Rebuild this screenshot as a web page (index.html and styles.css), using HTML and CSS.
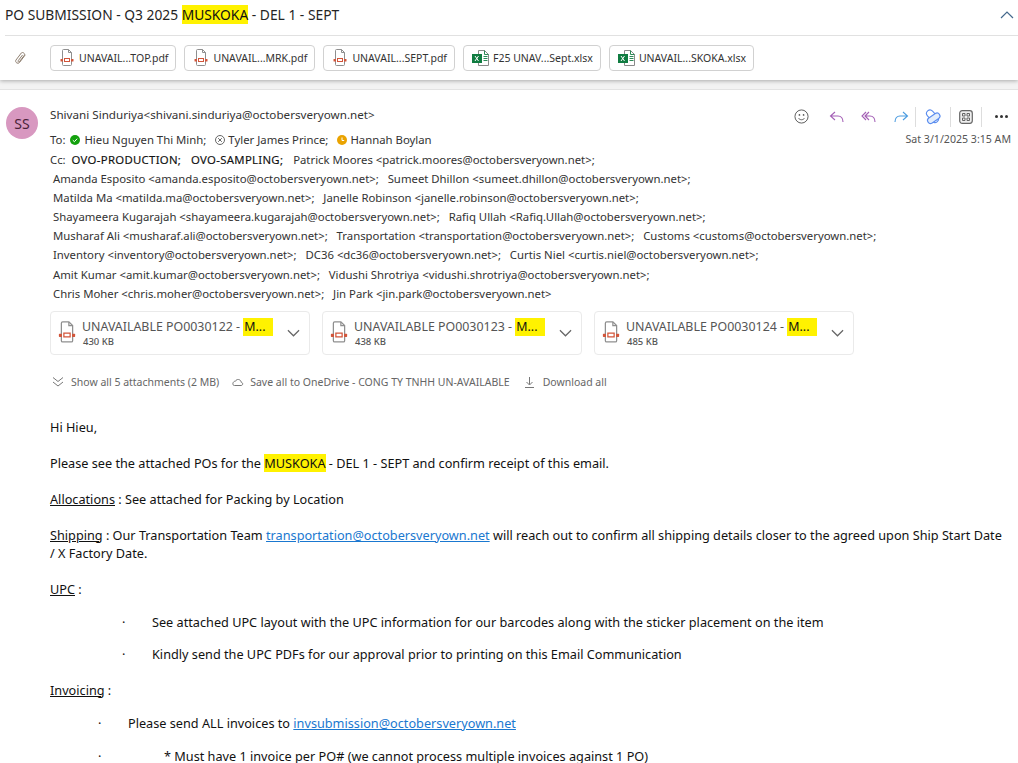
FILE: index.html
```html
<!DOCTYPE html>
<html lang="en">
<head>
    <meta charset="UTF-8">
    <title>PO SUBMISSION - Q3 2025 MUSKOKA - DEL 1 - SEPT</title>
    <link rel="stylesheet" href="styles.css">
</head>
<body>
    <svg class="defs" width="0" height="0">
        <symbol id="pdf" viewBox="0 0 16 18">
            <path d="M3.500 1.500a1 1 0 0 1 1-1h5l3 3v12a1 1 0 0 1-1 1h-7a1 1 0 0 1-1-1z" fill="#fff" stroke="#8f8f8f"/>
            <path d="M9.500 .5v3h3" fill="none" stroke="#8f8f8f"/>
            <rect x="5.500" y="9.500" width="5" height="3" fill="#fff" stroke="#d2553a"/>
            <rect x="1.500" y="10" width="2.500" height="2.500" rx=".5" fill="#d2553a"/>
            <rect x="12" y="10" width="2.500" height="2.500" rx=".5" fill="#d2553a"/>
        </symbol>
        <symbol id="xls" viewBox="0 0 17 16">
            <path d="M6.500 .5h6l4 4v11h-10z" fill="#fff" stroke="#8a8a8a"/>
            <path d="M12.500 .5v4h4M11.500 6.500h4M11.500 8.500h4M11.500 10.500h4" fill="none" stroke="#2c8a57"/>
            <rect x="0" y="4" width="10" height="9" fill="#107c41"/>
            <path d="M3 6l3.500 5M6.500 6L3 11" fill="none" stroke="#fff"/>
        </symbol>
        <symbol id="chev" viewBox="0 0 14 8">
            <path d="M1 1l6 6 6-6" fill="none" stroke="#666" stroke-width="1.300"/>
        </symbol>
    </svg>

    <div class="top">
        <div class="subject">
            <h1>PO SUBMISSION - Q3 2025 <mark>MUSKOKA</mark> - DEL 1 - SEPT</h1>
            <svg class="collapse" width="14" height="8" viewBox="0 0 14 8"><path d="M1 7l6-6 6 6" fill="none" stroke="#44688c" stroke-width="1.200"/></svg>
        </div>
        <div class="file-row">
            <svg class="clip" width="13" height="14" viewBox="0 0 13 14"><path d="M11.300 3.800L5.500 11.500c-1.600 2-5 -.4-3.500-2.500L7.300 2c1.200-1.500 4.200.6 3 2.300L5.500 10.600c-.6.800-1.900 0-1.300-.9L8.600 3.900" fill="none" stroke="#8f7f70"/></svg>
            <div class="file"><svg width="16" height="18"><use href="#pdf"/></svg>UNAVAIL...TOP.pdf</div>
            <div class="file"><svg width="16" height="18"><use href="#pdf"/></svg>UNAVAIL...MRK.pdf</div>
            <div class="file"><svg width="16" height="18"><use href="#pdf"/></svg>UNAVAIL...SEPT.pdf</div>
            <div class="file"><svg width="17" height="16"><use href="#xls"/></svg>F25 UNAV...Sept.xlsx</div>
            <div class="file"><svg width="17" height="16"><use href="#xls"/></svg>UNAVAIL...SKOKA.xlsx</div>
        </div>
    </div>
    <div class="band"></div>

    <div class="message">
        <div class="avatar">SS</div>
        <div class="head">
            <div class="head-top">
                <div class="from">Shivani Sinduriya&lt;shivani.sinduriya@octobersveryown.net&gt;</div>
                <div class="actions">
                    <svg class="smile" width="15" height="15" viewBox="0 0 16 16"><circle cx="8" cy="8" r="7" fill="none" stroke="#555"/><circle cx="5.800" cy="6.300" r=".9" fill="#555"/><circle cx="10.200" cy="6.300" r=".9" fill="#555"/><path d="M4.800 9.800c1.500 2.200 4.900 2.200 6.400 0" fill="none" stroke="#555"/></svg>
                    <svg class="gap" width="16" height="14" viewBox="0 0 16 14"><path d="M6 2L1.500 6 6 10M2 6h7c3 0 5 2 5 6" fill="none" stroke="#a35fb5" stroke-width="1.100"/></svg>
                    <svg class="gap" width="16" height="14" viewBox="0 0 16 14"><path d="M5 2L1 6l4 4M8 2L4 6l4 4M4.500 6H9c3 0 5 2 5 6" fill="none" stroke="#a35fb5" stroke-width="1.100"/></svg>
                    <svg class="gap forward" width="16" height="14" viewBox="0 0 16 14"><path d="M10 2l4.500 4L10 10M14 6H7c-3 0-5 2-5 6" fill="none" stroke="#4a9be0" stroke-width="1.100"/></svg>
                    <i class="sep"></i>
                    <svg width="18" height="18" viewBox="0 0 18 18"><path d="M6 5.500l5 5.500" fill="none" stroke="#5b8def" stroke-width="8" stroke-linecap="round"/><path d="M6 5.500l5 5.500" fill="none" stroke="#fff" stroke-width="5.800" stroke-linecap="round"/><path d="M6.500 12.500l6.500-4.500" fill="none" stroke="#5b8def" stroke-width="7" stroke-linecap="round"/><path d="M6.500 12.500l6.500-4.500" fill="none" stroke="#e4eefc" stroke-width="4.800" stroke-linecap="round"/></svg>
                    <i class="sep"></i>
                    <svg width="14" height="14" viewBox="0 0 14 14"><rect x=".7" y=".7" width="12.600" height="12.600" rx="2.500" fill="#efefef" stroke="#666" stroke-width="1.200"/><path d="M3.500 3.500h2.500v2.500H3.500zM8 3.500h2.500v2.500H8zM3.500 8H6v2.500H3.500zM8 8h2.500v2.500H8z" fill="none" stroke="#666"/></svg>
                    <i class="sep"></i>
                    <div class="more"><b></b><b></b><b></b></div>
                </div>
            </div>
            <div class="to-row">
                <div class="to">
                    <span>To:</span>
                    <svg class="status" width="10" height="10" viewBox="0 0 10 10"><circle cx="5" cy="5" r="5" fill="#13a10e"/><path d="M2.800 5.200l1.600 1.500 2.800-3" fill="none" stroke="#fff"/></svg>
                    <span>Hieu Nguyen Thi Minh;</span>
                    <svg class="status status-far" width="10" height="10" viewBox="0 0 10 10"><circle cx="5" cy="5" r="4.500" fill="none" stroke="#666"/><path d="M3.200 3.200l3.600 3.600M6.800 3.200l-3.600 3.600" stroke="#666"/></svg>
                    <span>Tyler James Prince;</span>
                    <svg class="status status-far" width="10" height="10" viewBox="0 0 10 10"><circle cx="5" cy="5" r="5" fill="#eaa300"/><path d="M5 2.500v3h2.200" fill="none" stroke="#fff"/></svg>
                    <span>Hannah Boylan</span>
                </div>
                <div class="date">Sat 3/1/2025 3:15 AM</div>
            </div>
            <div class="cc">
                <div>Cc: &nbsp;<strong>OVO-PRODUCTION;</strong>&nbsp;&nbsp; <strong>OVO-SAMPLING;</strong>&nbsp;&nbsp; Patrick Moores &lt;patrick.moores@octobersveryown.net&gt;;</div>
                <div class="cc-line">Amanda Esposito &lt;amanda.esposito@octobersveryown.net&gt;;&nbsp;&nbsp; Sumeet Dhillon &lt;sumeet.dhillon@octobersveryown.net&gt;;</div>
                <div class="cc-line">Matilda Ma &lt;matilda.ma@octobersveryown.net&gt;;&nbsp;&nbsp; Janelle Robinson &lt;janelle.robinson@octobersveryown.net&gt;;</div>
                <div class="cc-line">Shayameera Kugarajah &lt;shayameera.kugarajah@octobersveryown.net&gt;;&nbsp;&nbsp; Rafiq Ullah &lt;Rafiq.Ullah@octobersveryown.net&gt;;</div>
                <div class="cc-line">Musharaf Ali &lt;musharaf.ali@octobersveryown.net&gt;;&nbsp;&nbsp; Transportation &lt;transportation@octobersveryown.net&gt;;&nbsp;&nbsp; Customs &lt;customs@octobersveryown.net&gt;;</div>
                <div class="cc-line">Inventory &lt;inventory@octobersveryown.net&gt;;&nbsp;&nbsp; DC36 &lt;dc36@octobersveryown.net&gt;;&nbsp;&nbsp; Curtis Niel &lt;curtis.niel@octobersveryown.net&gt;;</div>
                <div class="cc-line">Amit Kumar &lt;amit.kumar@octobersveryown.net&gt;;&nbsp;&nbsp; Vidushi Shrotriya &lt;vidushi.shrotriya@octobersveryown.net&gt;;</div>
                <div class="cc-line">Chris Moher &lt;chris.moher@octobersveryown.net&gt;;&nbsp;&nbsp; Jin Park &lt;jin.park@octobersveryown.net&gt;</div>
            </div>
            <div class="cards">
                <div class="card">
                    <svg width="20" height="23"><use href="#pdf"/></svg>
                    <div class="card-text">
                        <div class="card-name">UNAVAILABLE PO0030122 - <mark>M...</mark></div>
                        <div class="card-size">430 KB</div>
                    </div>
                    <svg class="card-chev" width="13" height="8"><use href="#chev"/></svg>
                </div>
                <div class="card">
                    <svg width="20" height="23"><use href="#pdf"/></svg>
                    <div class="card-text">
                        <div class="card-name">UNAVAILABLE PO0030123 - <mark>M...</mark></div>
                        <div class="card-size">438 KB</div>
                    </div>
                    <svg class="card-chev" width="13" height="8"><use href="#chev"/></svg>
                </div>
                <div class="card">
                    <svg width="20" height="23"><use href="#pdf"/></svg>
                    <div class="card-text">
                        <div class="card-name">UNAVAILABLE PO0030124 - <mark>M...</mark></div>
                        <div class="card-size">485 KB</div>
                    </div>
                    <svg class="card-chev" width="13" height="8"><use href="#chev"/></svg>
                </div>
            </div>
            <div class="links">
                <span class="link-show"><svg width="12" height="12" viewBox="0 0 12 12"><path d="M1 1.500l5 4 5-4M1 6l5 4 5-4" fill="none" stroke="#777"/></svg>Show all 5 attachments (2 MB)</span>
                <span class="link-save"><svg width="13" height="8" viewBox="0 0 12 8"><path d="M3 7.500h6.500c2.200 0 2.200-3 .2-3.200C9.300 1 5 .5 4 3.200 1.500 2.800 0 7.500 3 7.500z" fill="none" stroke="#777"/></svg>Save all to OneDrive - CONG TY TNHH UN-AVAILABLE</span>
                <span class="link-down"><svg width="9" height="11" viewBox="0 0 9 11"><path d="M4.500 0v7.500M1.500 5l3 3 3-3M0 10.500h9" fill="none" stroke="#777"/></svg>Download all</span>
            </div>
            <div class="body">
                <p>Hi Hieu,</p>
                <p>Please see the attached POs for the <mark>MUSKOKA</mark> - DEL 1 - SEPT and confirm receipt of this email.</p>
                <p><u>Allocations</u> : See attached for Packing by Location</p>
                <p><u>Shipping</u> : Our Transportation Team <a href="#">transportation@octobersveryown.net</a> will reach out to confirm all shipping details closer to the agreed upon Ship Start Date / X Factory Date.</p>
                <p class="list-head"><u>UPC</u> :</p>
                <p class="item item-wide"><span class="bullet">·</span><span>See attached UPC layout with the UPC information for our barcodes along with the sticker placement on the item</span></p>
                <p class="item item-wide item-last"><span class="bullet">·</span><span>Kindly send the UPC PDFs for our approval prior to printing on this Email Communication</span></p>
                <p class="list-head"><u>Invoicing</u> :</p>
                <p class="item"><span class="bullet">·</span><span>Please send ALL invoices to <a href="#">invsubmission@octobersveryown.net</a></span></p>
                <p class="item item-sub"><span class="bullet">·</span><span>* Must have 1 invoice per PO# (we cannot process multiple invoices against 1 PO)</span></p>
            </div>
        </div>
    </div>
</body>
</html>
```

FILE: styles.css
```css
*{
    box-sizing: border-box;
}
html, body{
    height: 763px;
    overflow: hidden;
}
body{
    margin: 0;
    background-color: white;
    color: #242424;
    font-family: "Noto Sans", "Open Sans", sans-serif;
    font-size: 11.350px;
}
mark{
    background-color: #fff200;
    color: #111;
}
.defs{
    position: absolute;
}

/* top bar */
.top{
    height: 80px;
    padding-left: 5px;
    position: relative;
    box-shadow: 0 1px 4px rgba(0,0,0,0.3);
}
.subject{
    display: flex;
    justify-content: space-between;
    align-items: center;
    padding-right: 4px;
    border-bottom: 1px solid #e1e1e1;
    height: 36px;
    padding-bottom: 6px;
}
h1{
    margin: 0;
    font-size: 13.800px;
    font-weight: 400;
    line-height: 19px;
}
.file-row{
    display: flex;
    align-items: center;
    gap: 8px;
    padding-top: 9px;
}
.clip{
    margin: 0 15px 0 9px;
}
.file{
    height: 26px;
    display: flex;
    align-items: center;
    gap: 4px;
    padding: 0 7px 0 8px;
    border: 1px solid #d1d1d1;
    border-radius: 4px;
    font-size: 10.500px;
    color: #333;
}
.band{
    height: 10px;
    background-color: #f3f3f3;
    border-bottom: 1px solid #e3e3e3;
}

/* message */
.message{
    display: flex;
    padding: 17px 0 0 6px;
}
.avatar{
    width: 32px;
    height: 32px;
    flex: none;
    border-radius: 50%;
    background-color: #d898c0;
    color: #4a2238;
    font-size: 14px;
    display: flex;
    align-items: center;
    justify-content: center;
}
.head{
    flex: 1;
    padding-left: 12px;
    min-width: 0;
}
.head-top{
    display: flex;
    justify-content: space-between;
    height: 20px;
    padding-right: 9px;
}
.from{
    font-size: 11.650px;
    line-height: 16px;
    color: #333;
}
.actions{
    display: flex;
    align-items: center;
    gap: 8px;
    margin-top: -1px;
}
.gap{
    margin-left: 8px;
}
.smile{
    margin-right: 4px;
}
.forward{
    margin-right: -2px;
}
.sep{
    width: 1px;
    height: 20px;
    background-color: #ddd;
}
.more{
    display: flex;
    gap: 2px;
    width: 16px;
    justify-content: center;
    margin-left: 3px;
}
.more b{
    width: 3px;
    height: 3px;
    border-radius: 50%;
    background-color: #333;
}
.to-row{
    display: flex;
    justify-content: space-between;
    padding-right: 7px;
    margin-top: 3px;
    height: 20px;
    line-height: 19px;
}
.to{
    display: flex;
    align-items: center;
    align-self: flex-start;
    height: 19px;
    color: #333;
}
.status{
    margin: 0 4px 0 5px;
}
.status-far{
    margin: 0 3px 0 9px;
}
.date{
    color: #555;
    font-size: 10.600px;
}
.cc{
    line-height: 19.100px;
    color: #333;
}
.cc-line{
    padding-left: 3px;
}
.cc strong{
    font-weight: 400;
    color: #111;
    letter-spacing: .3px;
    margin-right: 1px;
    -webkit-text-stroke: .15px #111;
}

/* attachment cards */
.cards{
    display: flex;
    gap: 12px;
    margin-top: 8px;
}
.card{
    width: 260px;
    height: 44px;
    display: flex;
    align-items: center;
    padding: 0 8px 0 6px;
    border: 1px solid #eaeaea;
    border-radius: 4px;
}
.card-text{
    flex: 1;
    padding-left: 5px;
}
.card-name{
    font-size: 12.400px;
    line-height: 19px;
    color: #555;
}
.card-name mark{
    display: inline-block;
    width: 30px;
    line-height: 18px;
    padding-left: 1px;
}
.card-size{
    font-size: 9.500px;
    line-height: 12px;
    padding-left: 1px;
    color: #555;
    font-weight: 500;
}
.card-chev{
    margin-right: 1px;
}
.links{
    display: flex;
    margin-top: 20px;
    font-size: 10.500px;
    line-height: 15px;
    color: #666;
}
.links span{
    display: flex;
    align-items: center;
}
.link-show svg{
    margin: 0 7px 0 2px;
}
.link-save{
    margin-left: 12px;
}
.link-save svg{
    margin-right: 6px;
}
.link-down{
    margin-left: 15px;
}
.link-down svg{
    margin-right: 9px;
}

/* mail body */
.body{
    padding-top: 28px;
    padding-right: 12px;
    font-size: 12.700px;
    line-height: 18px;
    color: #111;
}
.body p{
    margin: 0 0 18px 0;
}
.body a{
    color: #1a78d0;
}
.body .list-head{
    margin-bottom: 15px;
}
.body .item{
    display: flex;
    padding-left: 48px;
    margin-bottom: 15px;
}
.body .item-wide{
    padding-left: 72px;
    margin-bottom: 14px;
}
.body .item-last{
    margin-bottom: 18px;
}
.bullet{
    width: 30px;
}
.item-sub .bullet{
    width: 66px;
}
```
